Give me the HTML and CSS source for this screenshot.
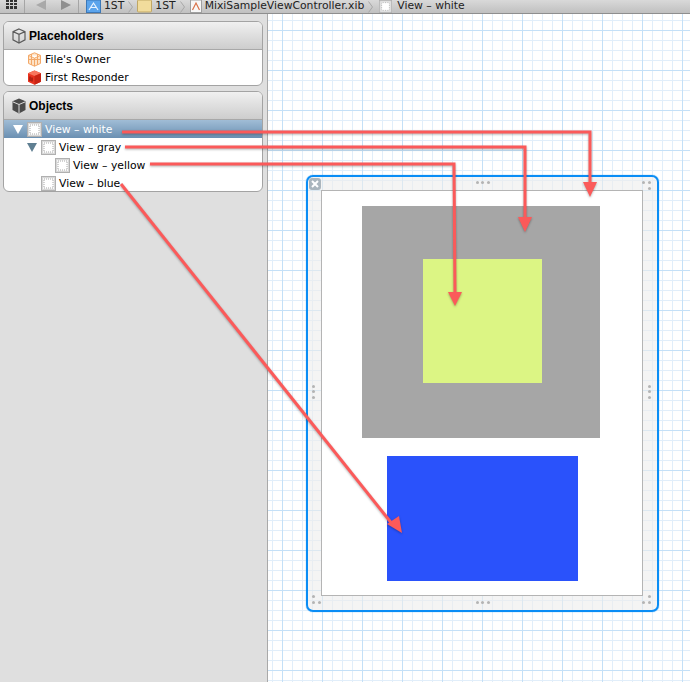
FILE: index.html
```html
<!DOCTYPE html>
<html lang="en">

<head>
    <meta charset="UTF-8">
    <meta name="viewport" content="width=device-width, initial-scale=1.0">
    <title>MixiSampleViewController.xib</title>
    <link rel="stylesheet" href="styles.css">
</head>

<body>
    <svg class="defs" width="0" height="0">
        <symbol id="view-icon" viewBox="0 0 15 15">
            <rect x="0.5" y="0.5" width="14" height="14" fill="#f6f6f6" stroke="#b0b0b0" />
            <rect x="1.5" y="1.5" width="12" height="12" fill="none" stroke="#d8d8d8" />
            <rect x="3" y="3" width="9" height="9" fill="#fff" stroke="#a8a8a8" stroke-width="1" stroke-dasharray="1 1" />
        </symbol>
    </svg>

    <div class="jumpbar">
        <svg class="grid-btn" width="12" height="10" viewBox="0 0 12 10" fill="#333">
            <rect x="0" y="0" width="3" height="2" /><rect x="4" y="0" width="3" height="2" /><rect x="8" y="0" width="3" height="2" />
            <rect x="0" y="3" width="3" height="2" /><rect x="4" y="3" width="3" height="2" /><rect x="8" y="3" width="3" height="2" />
            <rect x="0" y="6" width="3" height="3" /><rect x="4" y="6" width="3" height="3" /><rect x="8" y="6" width="3" height="3" />
        </svg>
        <span class="sep sep-a"></span>
        <svg class="nav-left" width="10" height="11" viewBox="0 0 10 11"><path d="M10 0V10L0 5Z" fill="#a9a9a9" /></svg>
        <svg class="nav-right" width="10" height="11" viewBox="0 0 10 11"><path d="M0 0V10L10 5Z" fill="#8f8f8f" /></svg>
        <span class="sep sep-b"></span>
        <svg class="crumb-icon crumb-first" width="15" height="13" viewBox="0 0 15 13">
            <rect x="0.5" y="0" width="14" height="12.5" fill="#5ba4ec" stroke="#3c78b8" />
            <path d="M3 10L7.5 3 12 10M5 7.5H10" fill="none" stroke="#e8f3ff" stroke-width="1.2" />
        </svg>
        <span class="crumb">1ST</span>
        <svg class="chev" width="5" height="12" viewBox="0 0 5 12"><path d="M0.5 0.5L4.5 6 0.5 11.5" fill="none" stroke="#a8a8a8" /></svg>
        <svg class="crumb-icon" width="15" height="13" viewBox="0 0 15 13">
            <rect x="0.5" y="0" width="14" height="12" rx="1" fill="#f1dc9c" stroke="#c0a765" />
        </svg>
        <span class="crumb">1ST</span>
        <svg class="chev" width="5" height="12" viewBox="0 0 5 12"><path d="M0.5 0.5L4.5 6 0.5 11.5" fill="none" stroke="#a8a8a8" /></svg>
        <svg class="crumb-icon crumb-doc" width="12" height="13" viewBox="0 0 12 13">
            <rect x="0.5" y="0" width="11" height="12.5" fill="#f7f7f7" stroke="#a0a0a0" />
            <path d="M2.5 10L6 3 9.5 10" fill="none" stroke="#d9724a" stroke-width="1.2" />
        </svg>
        <span class="crumb">MixiSampleViewController.xib</span>
        <svg class="chev" width="5" height="12" viewBox="0 0 5 12"><path d="M0.5 0.5L4.5 6 0.5 11.5" fill="none" stroke="#a8a8a8" /></svg>
        <svg class="crumb-icon crumb-view" width="15" height="13" viewBox="0 0 15 15"><use href="#view-icon" /></svg>
        <span class="crumb crumb-last">View – white</span>
    </div>

    <div class="editor">
        <aside class="sidebar">
            <section class="panel">
                <header class="panel-head">
                    <svg width="14" height="16" viewBox="0 0 14 16" fill="none" stroke="#5c5c5c" stroke-width="1.2">
                        <path d="M7 1L13 3.6V11.8L7 15 1 11.8V3.6ZM1 3.6L7 6.4 13 3.6M7 6.4V15" />
                    </svg>
                    <h2>Placeholders</h2>
                </header>
                <ul class="rows rows-plain">
                    <li class="row">
                        <svg width="15" height="15" viewBox="0 0 15 15" fill="#fde3c8" stroke="#f3a868">
                            <path d="M7.5 0.8L13.5 3.4V11.4L7.5 14.2 1.5 11.4V3.4ZM1.5 3.4L7.5 6.2 13.5 3.4M7.5 6.2V14.2M1.5 7.5L13.5 7.5M4.5 2V12.8M10.5 2V12.8" />
                        </svg>
                        <span>File's Owner</span>
                    </li>
                    <li class="row">
                        <svg width="15" height="15" viewBox="0 0 15 15">
                            <path d="M7.5 0.5L14 3.2V11.8L7.5 14.7 1 11.8V3.2Z" fill="#e8321e" />
                            <path d="M1 3.2L7.5 6 14 3.2L7.5 0.5Z" fill="#f8755d" />
                            <path d="M7.5 6V14.7L14 11.8V3.2Z" fill="#c92414" />
                            <path d="M3 6.5V11M5 7.5V11.5" stroke="#7d1108" fill="none" />
                        </svg>
                        <span>First Responder</span>
                    </li>
                </ul>
            </section>

            <section class="panel">
                <header class="panel-head">
                    <svg width="14" height="16" viewBox="0 0 14 16">
                        <path d="M7 0.5L13.5 3.3V12L7 15.5 0.5 12V3.3Z" fill="#4a4a4a" />
                        <path d="M0.9 3.9L7 6.5 13.1 3.9" fill="none" stroke="#dcdcdc" stroke-width="1" />
                        <path d="M7 6.5V15" fill="none" stroke="#dcdcdc" stroke-width="1" />
                    </svg>
                    <h2>Objects</h2>
                </header>
                <ul class="rows rows-tree">
                    <li class="row row-selected level-0">
                        <span class="twist twist-white"></span>
                        <svg class="view-icon" width="15" height="15"><use href="#view-icon" /></svg>
                        <span>View – white</span>
                    </li>
                    <li class="row level-1">
                        <span class="twist"></span>
                        <svg class="view-icon" width="15" height="15"><use href="#view-icon" /></svg>
                        <span>View – gray</span>
                    </li>
                    <li class="row level-2">
                        <svg class="view-icon" width="15" height="15"><use href="#view-icon" /></svg>
                        <span>View – yellow</span>
                    </li>
                    <li class="row level-1">
                        <span class="twist twist-none"></span>
                        <svg class="view-icon" width="15" height="15"><use href="#view-icon" /></svg>
                        <span>View – blue</span>
                    </li>
                </ul>
            </section>
        </aside>

        <main class="canvas">
            <div class="frame">
                <div class="close-btn">
                    <svg width="8" height="8" viewBox="0 0 8 8"><path d="M1 1L7 7M7 1L1 7" stroke="#fff" stroke-width="2" /></svg>
                </div>
                <div class="view-white">
                    <div class="view-gray">
                        <div class="view-yellow"></div>
                    </div>
                    <div class="view-blue"></div>
                </div>
                <span class="handle handle-top"></span>
                <span class="handle handle-bottom"></span>
                <span class="handle handle-left"></span>
                <span class="handle handle-right"></span>
                <span class="handle corner-tr"></span>
                <span class="handle corner-bl"></span>
                <span class="handle corner-br"></span>
            </div>
        </main>
    </div>

    <!-- arrows drawn on top of everything -->
    <svg class="arrows" width="690" height="682" viewBox="0 0 690 682">
        <g fill="none" stroke="#fb5a5a" stroke-width="3">
            <path d="M122 132H590V184" />
            <path d="M125 147H525V219" />
            <path d="M150 164H454L455 293" />
            <path d="M121 184L393 525" />
        </g>
        <g fill="#fb5a5a">
            <path d="M583 182H597L590 197Z" />
            <path d="M518 217H532L525 232Z" />
            <path d="M448 292H462L455 306Z" />
            <path d="M387 524L399 516 402 533Z" />
        </g>
    </svg>
</body>

</html>
```

FILE: styles.css
```css
* {
    box-sizing: border-box;
}

body {
    margin: 0;
    width: 690px;
    height: 682px;
    overflow: hidden;
    position: relative;
    font-family: "DejaVu Sans", sans-serif;
    font-size: 10.8px;
    color: #000;
    background-color: #dfdfdf;
}

.defs {
    position: absolute;
}

/* top jump bar, cut off by the top of the window */
.jumpbar {
    height: 14px;
    display: flex;
    align-items: flex-end;
    overflow: hidden;
    background: linear-gradient(#d9d9d9, #c0c0c0);
    border-bottom: 1px solid #8e8e8e;
}

.jumpbar svg {
    flex: none;
}

.grid-btn {
    margin: 0 0 3px 6px;
}

.sep {
    width: 1px;
    height: 13px;
    background-color: #a5a5a5;
    flex: none;
}

.sep-a {
    margin-left: 6px;
}

.nav-left {
    margin: 0 0 2px 11px;
}

.nav-right {
    margin: 0 0 2px 15px;
}

.sep-b {
    margin-left: 7px;
}

.crumb-icon {
    margin-left: 4px;
}

.crumb-first {
    margin-left: 7px;
}

.crumb-doc {
    margin-left: 5px;
}

.crumb-view {
    margin-left: 5px;
}

.crumb {
    margin-left: 3px;
    height: 13px;
    line-height: 11px;
    white-space: nowrap;
    color: #222;
}

.crumb-last {
    margin-left: 4px;
}

.chev {
    margin-left: 4px;
}

.editor {
    display: flex;
    height: 668px;
}

.sidebar {
    width: 268px;
    flex: none;
    padding: 7px 4px 0 3px;
    display: flex;
    flex-direction: column;
    gap: 5px;
    background-color: #dfdfdf;
    border-right: 1px solid #a9a9a9;
}

.panel {
    border: 1px solid #a3a3a3;
    border-radius: 6px;
    overflow: hidden;
    background-color: #fff;
}

.panel-head {
    height: 28px;
    display: flex;
    align-items: center;
    gap: 3px;
    padding-left: 8px;
    background: linear-gradient(#f0f0f0, #cdcdcd);
    border-bottom: 1px solid #a8a8a8;
}

.panel-head h2 {
    margin: 0;
    font-family: "Liberation Sans", sans-serif;
    font-size: 12px;
    font-weight: bold;
}

.rows {
    margin: 0;
    padding: 0;
    list-style: none;
}

.rows-plain {
    height: 35px;
}

.rows-plain .row {
    padding-left: 23px;
}

.rows-tree {
    height: 71px;
}

.row {
    height: 18px;
    display: flex;
    align-items: center;
    gap: 3px;
    white-space: nowrap;
}

.row-selected {
    color: #fff;
    background: linear-gradient(#a0bdd6, #6b90b2);
}

.level-0 {
    padding-left: 9px;
}

.level-1 {
    padding-left: 23px;
}

.level-2 {
    padding-left: 51px;
}

.twist {
    width: 0;
    height: 0;
    margin-right: 1px;
    border-left: 5px solid transparent;
    border-right: 5px solid transparent;
    border-top: 9px solid #5f7f92;
}

.twist-white {
    border-top-color: #fff;
}

.twist-none {
    border-top-color: transparent;
}

.canvas {
    flex: 1;
    position: relative;
    background-color: #fff;
    background-image:
        linear-gradient(to right, #c4e0f7 1px, transparent 1px),
        linear-gradient(to bottom, #c4e0f7 1px, transparent 1px),
        linear-gradient(to right, #e1eefa 1px, transparent 1px),
        linear-gradient(to bottom, #e1eefa 1px, transparent 1px);
    background-size: 40px 40px, 40px 40px, 10px 10px, 10px 10px;
    background-position: 14px -4px, 0 16px, 4px 0, 0 6px;
}

/* the view sits where it was dropped on the canvas */
.frame {
    position: absolute;
    left: 38px;
    top: 161px;
    width: 353px;
    height: 437px;
    padding: 13px 14px 13px 13px;
    border: 2px solid #0a8df5;
    border-radius: 7px;
    box-shadow: 0 0 1px #0a8df5;
    background-color: rgba(236, 236, 236, 0.6);
}

.close-btn {
    position: absolute;
    left: 1px;
    top: 1px;
    width: 12px;
    height: 12px;
    display: flex;
    align-items: center;
    justify-content: center;
    border-radius: 3px;
    background-color: #aab5bd;
}

.view-white {
    height: 406px;
    padding: 15px 40px 0;
    background-color: #fff;
    border: 1px solid #b4b4b4;
}

.view-gray {
    width: 238px;
    height: 232px;
    padding: 53px 0 0 61px;
    background-color: #a6a6a6;
}

.view-yellow {
    width: 119px;
    height: 124px;
    background-color: #dcf584;
}

.view-blue {
    width: 191px;
    height: 125px;
    margin: 18px 0 0 25px;
    background-color: #2a52fb;
}

.handle {
    position: absolute;
    width: 3px;
    height: 3px;
    border-radius: 50%;
    background-color: #b4b4b4;
}

.handle-top {
    left: 168px;
    top: 4px;
    box-shadow: 5px 0 #b4b4b4, 11px 0 #b4b4b4;
}

.handle-bottom {
    left: 168px;
    bottom: 6px;
    box-shadow: 5px 0 #b4b4b4, 11px 0 #b4b4b4;
}

.handle-left {
    left: 4px;
    top: 208px;
    box-shadow: 0 5px #b4b4b4, 0 11px #b4b4b4;
}

.handle-right {
    right: 6px;
    top: 208px;
    box-shadow: 0 5px #b4b4b4, 0 11px #b4b4b4;
}

.corner-tr {
    right: 12px;
    top: 4px;
    box-shadow: 6px 0 #b4b4b4, 6px 6px #b4b4b4;
}

.corner-bl {
    left: 4px;
    bottom: 6px;
    box-shadow: 6px 0 #b4b4b4, 0 -6px #b4b4b4;
}

.corner-br {
    right: 6px;
    bottom: 6px;
    box-shadow: -6px 0 #b4b4b4, 0 -6px #b4b4b4;
}

.arrows {
    position: absolute;
    left: 0;
    top: 0;
    pointer-events: none;
    filter: drop-shadow(0 1px 1px rgba(0, 0, 0, 0.3));
}
```
